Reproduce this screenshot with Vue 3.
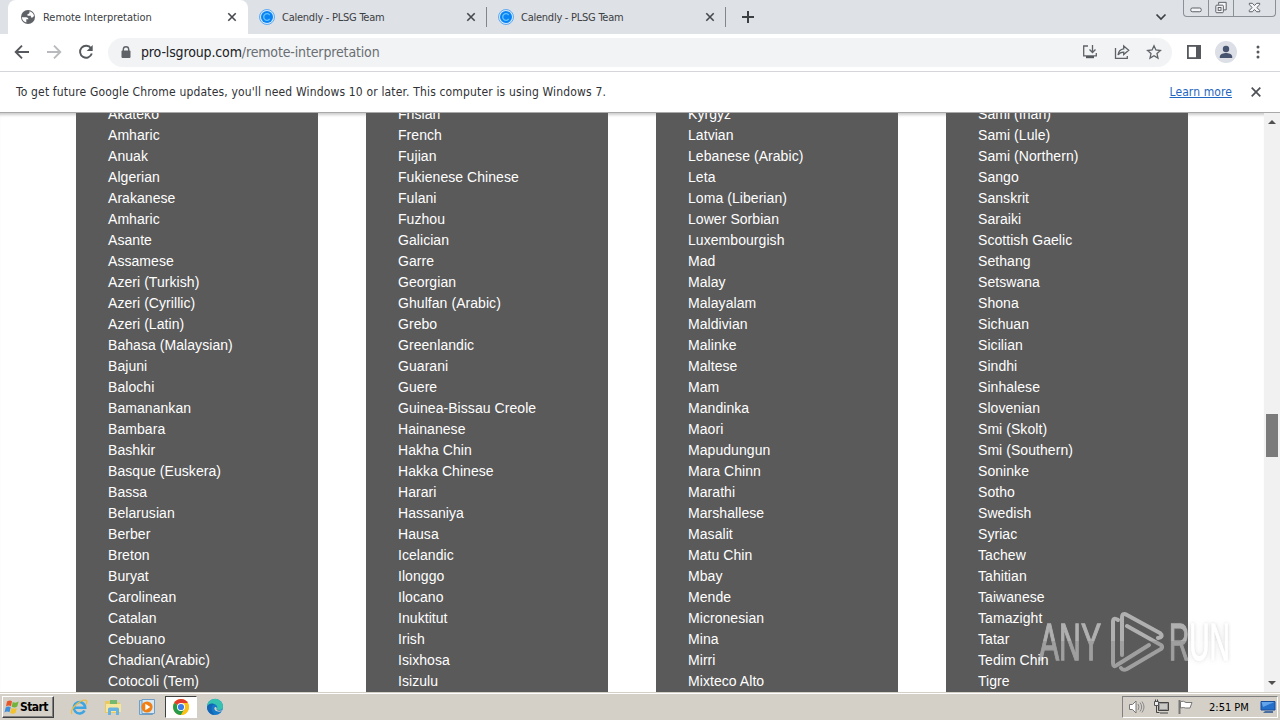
<template>
  <div class="screen">
    <header class="tab-strip">
      <div v-for="(tab, i) in tabs" :key="i" class="tab" :class="{ active: i === 0 }">
        <svg v-if="i === 0" class="favicon" viewBox="0 0 16 16">
          <circle cx="8" cy="8" r="7" fill="#5f6368" />
          <path d="M1.800 8.200h4.700q2 .3 2 2H6.300v3.300Q2.500 12.500 1.800 8.200zM9.500 2.300v1.500q-.3 1.200-2 1.200v1.700h3.400v1.800h1.600l1.500-1.500q-.6-3.600-4.500-4.700z" fill="#fff" />
        </svg>
        <svg v-else class="favicon" viewBox="0 0 16 16">
          <circle cx="8" cy="8" r="7.500" fill="#d5e9fb" stroke="#3d9cf5" stroke-width=".8" />
          <circle cx="8" cy="8" r="6" fill="#0a84f5" />
          <path d="M10.700 6.100A3.300 3.300 0 1 0 10.700 9.900" fill="none" stroke="#62c4fc" stroke-width="1.300" />
        </svg>
        <span class="tab-title">{{ tab }}</span>
        <svg class="tab-close" viewBox="0 0 10 10"><path d="M1.300 1.300l7.400 7.400M8.700 1.300L1.300 8.700" /></svg>
      </div>
      <svg class="new-tab" viewBox="0 0 12 12"><path d="M6 0v12M0 6h12" /></svg>
      <svg class="tab-search" viewBox="0 0 12 8"><path d="M1.500 1.500L6 6l4.500-4.500" /></svg>
      <div class="window-buttons">
        <span class="min"><svg viewBox="0 0 24 17"><rect x="6.500" y="8.500" width="11" height="4" rx="1.500" /></svg></span>
        <span class="max"><svg viewBox="0 0 24 17"><path d="M9.500 5V2.500h8v8H15" /><rect x="6.500" y="5.500" width="8" height="8" rx="1" /><rect x="9" y="8" width="3" height="3" /></svg></span>
        <span class="close"><svg viewBox="0 0 42 17"><path d="M15.500 3.500h3.200l2.300 2.300 2.300-2.300h3.200v1.500L23.500 8l3 3v1.500h-3.200L21 10.200l-2.300 2.300h-3.200V11l3-3-3-3z" /></svg></span>
      </div>
    </header>

    <nav class="toolbar">
      <svg class="nav-icon" viewBox="0 0 16 16"><path d="M15 8H2M8 1.700L1.700 8 8 14.300" /></svg>
      <svg class="nav-icon faded" viewBox="0 0 16 16"><path d="M1 8h13M8 1.700L14.300 8 8 14.300" /></svg>
      <svg class="nav-icon" viewBox="0 0 16 16"><path d="M13 4.300A6 6 0 1 0 13.800 9.500" /><path d="M14.700 1v6H8.700z" class="solid" /></svg>
      <div class="address">
        <svg class="lock" viewBox="0 0 10 13"><path d="M2.300 6V3.500a2.700 2.700 0 0 1 5.400 0V6" fill="none" stroke="#5f6368" stroke-width="1.400" /><rect x=".5" y="4.500" width="9" height="7.500" rx="1" fill="#5f6368" /></svg>
        <span class="url"><b>pro-lsgroup.com</b>/remote-interpretation</span>
        <svg class="install" viewBox="0 0 16 16"><path d="M6 2H1.700v9.800h12.600V9M10.500 1v7M7.500 5.500l3 3 3-3" /><path d="M4 12h8v2.200H4z" class="solid" /></svg>
        <svg class="share" viewBox="0 0 16 16"><path d="M1.500 4v10.300h11.800V12" /><path d="M9.700 2l5 4.300-5 4.200V8.200C7 8.200 5.300 9 4 11c.4-3.500 2.400-5.800 5.700-6.200z" /></svg>
        <svg class="star" viewBox="0 0 16 16"><path d="M8 1.800l1.900 4.200 4.500.5-3.400 3.100 1 4.500L8 11.800l-4 2.300 1-4.500-3.400-3.100 4.500-.5z" /></svg>
      </div>
      <svg class="side-panel" viewBox="0 0 14 14"><rect x=".9" y=".9" width="12.200" height="12.200" /><path d="M9 1h4v12H9z" class="solid" /></svg>
      <div class="avatar">
        <svg viewBox="0 0 22 22"><circle cx="11" cy="8" r="3.200" /><path d="M4.800 17v-1.500c0-2.400 4-3.500 6.200-3.500s6.200 1.100 6.200 3.500V17z" /></svg>
      </div>
      <svg class="menu" viewBox="0 0 4 14"><circle cx="2" cy="2" r="1.500" /><circle cx="2" cy="7" r="1.500" /><circle cx="2" cy="12" r="1.500" /></svg>
    </nav>

    <div class="infobar">
      <span class="info-text">To get future Google Chrome updates, you'll need Windows 10 or later. This computer is using Windows 7.</span>
      <a class="learn">Learn more</a>
      <svg class="info-close" viewBox="0 0 10 10"><path d="M.7.7l8.600 8.600M9.300.7L.7 9.300" /></svg>
    </div>

    <main class="viewport">
      <div class="page">
        <ul v-for="(column, i) in columns" :key="i" class="languages">
          <li v-for="(name, j) in column" :key="j">{{ name }}</li>
        </ul>
      </div>
      <div class="scrollbar">
        <i class="arrow up"></i>
        <i class="thumb"></i>
        <i class="arrow down"></i>
      </div>
      <div class="watermark">
        <span>ANY</span>
        <svg viewBox="0 0 54 62">
          <path d="M8 9Q3 5.500 3 11V52Q3 57 7 54L39 34" />
          <path d="M12 44V7Q12 1 17 4L50 22Q54 26 48 27" />
          <path d="M17 15L51 34Q53 36 51 38L17 58Q13 60 11 57" />
        </svg>
        <span class="run">RUN</span>
      </div>
    </main>

    <footer class="taskbar">
      <button class="start">
        <svg viewBox="0 0 16 16">
          <path d="M3 2.500q3-2 5-.2L7 7.200q-2.500-1.500-5 .2z" fill="#e5562b" />
          <path d="M8.700 3q3 1.500 6-.5l-1.500 5q-2.500 1.700-5.500.2z" fill="#72b33b" />
          <path d="M1.700 8.500q2.500-1.700 5-.2l-1.200 5q-2.500-1.500-5 .2z" fill="#3f8edb" />
          <path d="M7.400 9q3 1.500 5.500 0l-1.400 4.800q-2.500 1.700-5.300.2z" fill="#f4c22c" />
        </svg>
        <span>Start</span>
      </button>
      <div class="quick">
        <span class="task">
          <svg viewBox="0 0 18 18">
            <path d="M14.500 12.500A5.700 5.700 0 1 1 15.200 9.700H5" fill="none" stroke="#3da5e2" stroke-width="2.600" />
            <path d="M2 16C-1 11 11 1 16 2.300c1.500.6.800 2.700 0 4" fill="none" stroke="#e9bd45" stroke-width="1.300" />
          </svg>
        </span>
        <span class="task">
          <svg viewBox="0 0 18 18">
            <path d="M1 3h6l1 1.500h8V15H1z" fill="#e9c961" />
            <path d="M2 6h15v8H2z" fill="#f8e69d" />
            <path d="M6 2h7v4H6z" fill="#75b96e" />
            <path d="M4 17V11q0-1.500 1.500-1.500h8q1.500 0 1.500 1.500v6h-3v-4H7v4z" fill="#68b3df" />
          </svg>
        </span>
        <span class="task">
          <svg viewBox="0 0 18 18">
            <path d="M1.500 2.500h13v14h-13z" fill="#b9d9ee" stroke="#6f9fc6" />
            <path d="M4 1.500h12.500v14H4z" fill="#d5e8f4" stroke="#6f9fc6" />
            <circle cx="9" cy="9" r="5.600" fill="#f08016" />
            <path d="M7.300 5.800l5 3.200-5 3.200z" fill="#fff" />
          </svg>
        </span>
        <span class="task pressed">
          <svg viewBox="0 0 18 18">
            <circle cx="9" cy="9" r="8" fill="#fbc116" />
            <path d="M9 9L2.100 5a8 8 0 0 1 13.800 0z" fill="#e33b2e" />
            <path d="M9 9L2.100 5A8 8 0 0 0 9 17l3.500-6z" fill="#269c4b" />
            <path d="M9 5h6.900A8 8 0 0 1 9 17l3.500-6z" fill="#fbc116" />
            <circle cx="9" cy="9" r="4" fill="#fff" />
            <circle cx="9" cy="9" r="3.100" fill="#3e7de8" />
          </svg>
        </span>
        <span class="task">
          <svg viewBox="0 0 18 18">
            <circle cx="9" cy="9" r="8" fill="#1479c9" />
            <path d="M1 9a8 8 0 0 1 16-.5c.2 3-2.500 4-5.500 3.300C10 11.300 12 10 11 8 9 5 3 5 1 9z" fill="#35c2b0" />
            <path d="M8.500 9.500c-1 3 3 5 7 3.800l1-1c-2 .8-5.500.7-6-1 1-1.700-1-3.300-2-1.800z" fill="#d4d0c8" />
            <path d="M1 9c1-3.500 5-4.500 8-2.500-4 0-5 5-.5 10.300C4 16.800 1 13 1 9z" fill="#1266b5" />
          </svg>
        </span>
      </div>
      <div class="tray">
        <svg class="speaker" viewBox="0 0 17 16"><path d="M.5 5.500h3L7 2v12l-3.500-3.500h-3z" fill="#fff" stroke="#777" /><path d="M9 5q2 3 0 6M11 3.500q3.300 4.500 0 9M13 2.500q4 5.500 0 11" fill="none" stroke="#888" /></svg>
        <svg class="network" viewBox="0 0 17 16"><path d="M5.500 3.500h10v8h-10z" fill="#999" stroke="#444" /><path d="M7 5h7v5H7z" fill="#c9c9c6" /><path d="M1.500 2.500h4v4h-4z" fill="#eee" stroke="#555" /><path d="M2.500.5v2M4.500.5v2M3.500 7v6.500h3M7 14h8" fill="none" stroke="#444" /></svg>
        <svg class="flag" viewBox="0 0 17 16"><path d="M2.500 1v14" stroke="#777" stroke-width="2" /><path d="M3.500 2.500q3-1 5.500 1h6L13 9H8.500q-2-1-5 0z" fill="#fff" stroke="#777" /></svg>
        <span class="clock">2:51 PM</span>
        <svg class="desktop" viewBox="0 0 16 14"><path d="M1 1.500h14v8.500H1z" fill="#246fc9" stroke="#174d9b" /><path d="M1.500 2h13L3 7z" fill="#63a4ea" /><path d="M5 11h8v2H3z" fill="#4b6f9e" /></svg>
      </div>
    </footer>
  </div>
</template>

<script setup>
const tabs = ['Remote Interpretation', 'Calendly - PLSG Team', 'Calendly - PLSG Team']

const columns = [
  [
    'Akateko', 'Amharic', 'Anuak', 'Algerian', 'Arakanese', 'Amharic', 'Asante',
    'Assamese', 'Azeri (Turkish)', 'Azeri (Cyrillic)', 'Azeri (Latin)',
    'Bahasa (Malaysian)', 'Bajuni', 'Balochi', 'Bamanankan', 'Bambara', 'Bashkir',
    'Basque (Euskera)', 'Bassa', 'Belarusian', 'Berber', 'Breton', 'Buryat',
    'Carolinean', 'Catalan', 'Cebuano', 'Chadian(Arabic)', 'Cotocoli (Tem)'
  ],
  [
    'Frisian', 'French', 'Fujian', 'Fukienese Chinese', 'Fulani', 'Fuzhou',
    'Galician', 'Garre', 'Georgian', 'Ghulfan (Arabic)', 'Grebo', 'Greenlandic',
    'Guarani', 'Guere', 'Guinea-Bissau Creole', 'Hainanese', 'Hakha Chin',
    'Hakka Chinese', 'Harari', 'Hassaniya', 'Hausa', 'Icelandic', 'Ilonggo',
    'Ilocano', 'Inuktitut', 'Irish', 'Isixhosa', 'Isizulu'
  ],
  [
    'Kyrgyz', 'Latvian', 'Lebanese (Arabic)', 'Leta', 'Loma (Liberian)',
    'Lower Sorbian', 'Luxembourgish', 'Mad', 'Malay', 'Malayalam', 'Maldivian',
    'Malinke', 'Maltese', 'Mam', 'Mandinka', 'Maori', 'Mapudungun', 'Mara Chinn',
    'Marathi', 'Marshallese', 'Masalit', 'Matu Chin', 'Mbay', 'Mende',
    'Micronesian', 'Mina', 'Mirri', 'Mixteco Alto'
  ],
  [
    'Sami (Inari)', 'Sami (Lule)', 'Sami (Northern)', 'Sango', 'Sanskrit',
    'Saraiki', 'Scottish Gaelic', 'Sethang', 'Setswana', 'Shona', 'Sichuan',
    'Sicilian', 'Sindhi', 'Sinhalese', 'Slovenian', 'Smi (Skolt)',
    'Smi (Southern)', 'Soninke', 'Sotho', 'Swedish', 'Syriac', 'Tachew',
    'Tahitian', 'Taiwanese', 'Tamazight', 'Tatar', 'Tedim Chin', 'Tigre'
  ]
]
</script>

<style>
body {
  margin: 0;
  overflow: hidden;
}
</style>

<style scoped>
.screen {
  display: flex;
  flex-direction: column;
  width: 1280px;
  height: 720px;
  overflow: hidden;
  background: #fff;
  font-family: 'DejaVu Sans Condensed', 'DejaVu Sans', sans-serif;
  font-stretch: condensed;
  font-size: 11px;
  color: #3c4043;
}

svg {
  display: block;
  flex: none;
}

/* Tabs */
.tab-strip {
  display: flex;
  flex: none;
  height: 34px;
  box-sizing: border-box;
  padding-left: 8px;
  background: #dee1e6;
}

.tab {
  display: flex;
  align-items: center;
  flex: none;
  box-sizing: border-box;
  width: 239px;
  height: 34px;
  padding: 0 10px 0 11px;
}

.tab:not(.active) {
  position: relative;
}

.tab:not(.active)::after {
  content: '';
  position: absolute;
  right: 0;
  top: 7px;
  width: 1px;
  height: 20px;
  background: #80868b;
}

.tab.active {
  width: 240px;
  padding: 0 10px 0 12px;
  background: #fff;
  border-radius: 8px 8px 0 0;
}

.favicon {
  width: 16px;
  height: 16px;
  margin-right: 7px;
}

.tab-title {
  flex: 1;
  white-space: nowrap;
  letter-spacing: -0.04px;
}

.tab:not(.active) .tab-title {
  letter-spacing: -0.25px;
}

.tab-close {
  width: 10px;
  height: 10px;
  margin-right: 1px;
  fill: none;
  stroke: #45494d;
  stroke-width: 1.6;
}

.new-tab {
  width: 12px;
  height: 12px;
  margin: 11px 0 0 16px;
  fill: none;
  stroke: #3c4043;
  stroke-width: 2;
}

.tab-search {
  width: 12px;
  height: 8px;
  margin: 13px 0 0 auto;
  fill: none;
  stroke: #3c4043;
  stroke-width: 1.7;
}

.window-buttons {
  display: flex;
  box-sizing: border-box;
  width: 93px;
  height: 17px;
  margin: 0 4px 0 16px;
  border: 1px solid #8b8f96;
  border-top: 0;
  border-radius: 0 0 4px 4px;
}

.window-buttons span {
  width: 24px;
  border-right: 1px solid #8b8f96;
}

.window-buttons .close {
  width: 41px;
  border: 0;
}

.window-buttons svg {
  width: 100%;
  height: 16px;
  fill: #f4f5f7;
  stroke: #54585f;
}

/* Toolbar */
.toolbar {
  display: flex;
  flex: none;
  align-items: center;
  height: 36px;
  padding: 0 0 1px 14px;
  border-bottom: 1px solid #d4d6d9;
  background: #fff;
}

.nav-icon {
  width: 16px;
  height: 16px;
  margin-right: 16px;
  fill: none;
  stroke: #55585c;
  stroke-width: 1.9;
}

.nav-icon.faded {
  stroke: #b8babd;
}

.solid {
  fill: #55585c;
  stroke: none;
}

.address {
  display: flex;
  align-items: center;
  box-sizing: border-box;
  width: 1064px;
  height: 29px;
  margin-left: -2px;
  padding: 0 10px 0 13px;
  border-radius: 15px;
  background: #f1f3f4;
}

.lock {
  width: 10px;
  height: 13px;
  margin-right: 10px;
}

.url {
  flex: 1;
  font-size: 14px;
  letter-spacing: -0.14px;
  color: #6a6e73;
  white-space: nowrap;
}

.url b {
  font-weight: normal;
  color: #202124;
}

.install,
.share,
.star {
  width: 16px;
  height: 16px;
  margin-left: 16px;
  fill: none;
  stroke: #5f6368;
  stroke-width: 1.3;
}

.side-panel {
  width: 14px;
  height: 14px;
  margin-left: 15px;
  fill: none;
  stroke: #55585c;
  stroke-width: 1.8;
}

.avatar {
  width: 22px;
  height: 22px;
  margin-left: 14px;
  border-radius: 50%;
  background: #dcdfe5;
}

.avatar svg {
  width: 22px;
  height: 22px;
  fill: #47546f;
}

.menu {
  width: 4px;
  height: 14px;
  margin-left: 19px;
  fill: #55585c;
}

/* Update notice */
.infobar {
  display: flex;
  align-items: center;
  flex: none;
  box-sizing: border-box;
  height: 41px;
  padding: 0 19px 1px 16px;
  border-bottom: 1px solid #a9a9a9;
  color: #303236;
  font-size: 12px;
}

.info-text {
  flex: 1;
  white-space: nowrap;
  letter-spacing: 0.16px;
}

.learn {
  color: #1f66c1;
  text-decoration: underline;
  letter-spacing: 0.1px;
}

.info-close {
  width: 10px;
  height: 10px;
  margin-left: 19px;
  fill: none;
  stroke: #4d5054;
  stroke-width: 1.7;
}

/* Page content */
.viewport {
  position: relative;
  display: flex;
  flex: none;
  height: 579px;
  overflow: hidden;
}

.page {
  display: flex;
  gap: 48px;
  width: 1188px;
  height: 579px;
  padding-left: 76px;
  box-shadow: inset 0 4px 3px -2px #ccc;
}

.languages {
  flex: none;
  box-sizing: border-box;
  width: 242px;
  height: 579px;
  margin: 0;
  padding: 0 0 0 32px;
  overflow: hidden;
  list-style: none;
  background: #5a5a5a;
  color: #fff;
  font: 14px/21px 'Liberation Sans', Arial, sans-serif;
  letter-spacing: 0.06px;
}

.languages li:first-child {
  margin-top: -9px;
}

.scrollbar {
  display: flex;
  flex-direction: column;
  align-items: center;
  box-sizing: border-box;
  width: 16px;
  height: 579px;
  padding: 7px 0;
  background: #f1f1f1;
}

.arrow {
  border: 4px solid transparent;
}

.arrow.up {
  border-top: 0;
  border-bottom-color: #505050;
}

.arrow.down {
  margin-top: auto;
  border-bottom: 0;
  border-top-color: #505050;
}

.thumb {
  width: 12px;
  height: 43px;
  margin-top: 290px;
  background: #7b7b7b;
}

.watermark {
  position: absolute;
  left: 1039px;
  top: 497px;
  display: flex;
  align-items: center;
  color: #fff;
  opacity: 0.52;
  mask-image: linear-gradient(#000 50%, rgba(0, 0, 0, 0.8) 50%);
  font: 52px/62px 'Liberation Sans', Arial, sans-serif;
}

.watermark span {
  width: 62px;
  padding-top: 1px;
  white-space: nowrap;
  transform: scaleX(0.58);
  transform-origin: 0 50%;
  -webkit-text-stroke: 1.3px #fff;
}

.watermark .run {
  transform: scaleX(0.54);
  text-shadow: 0 0 4px rgba(120, 120, 120, 0.7), 0 0 8px rgba(120, 120, 120, 0.4);
}

.watermark svg {
  width: 54px;
  height: 62px;
  margin: 0 5px 0 9px;
  fill: none;
  stroke: #fff;
  stroke-width: 4;
  stroke-linecap: round;
}

/* Taskbar */
.taskbar {
  display: flex;
  flex: none;
  box-sizing: border-box;
  height: 28px;
  padding: 3px 2px 0;
  border-top: 1px solid #d4d0c8;
  background: #d4d0c8;
  box-shadow: inset 0 1px #fff;
}

.start {
  display: flex;
  align-items: center;
  box-sizing: border-box;
  width: 52px;
  height: 22px;
  padding: 0 0 0 1px;
  border: 1px solid;
  border-color: #fff #404040 #404040 #fff;
  background: #d4d0c8;
  box-shadow: inset -1px -1px #808080;
  color: #000;
  font: bold 12px 'DejaVu Sans Condensed', sans-serif;
  letter-spacing: -0.6px;
}

.start svg {
  width: 16px;
  height: 16px;
}

.quick {
  display: flex;
  margin-left: 9px;
}

.task {
  display: flex;
  align-items: center;
  justify-content: center;
  box-sizing: border-box;
  width: 32px;
  height: 22px;
  margin-right: 2px;
}

.task svg {
  width: 18px;
  height: 18px;
}

.task.pressed {
  border: 1px solid;
  border-color: #404040 #fff #fff #404040;
  background: #fff;
}

.tray {
  display: flex;
  align-items: center;
  box-sizing: border-box;
  width: 156px;
  height: 22px;
  margin-left: auto;
  padding-left: 6px;
  border: 1px solid;
  border-color: #808080 #fff #fff #808080;
  color: #000;
}

.speaker,
.network,
.flag {
  width: 17px;
  height: 16px;
  margin-right: 7px;
}

.clock {
  flex: 1;
  padding-left: 8px;
  white-space: nowrap;
}

.desktop {
  width: 16px;
  height: 14px;
  margin-right: 1px;
}
</style>
